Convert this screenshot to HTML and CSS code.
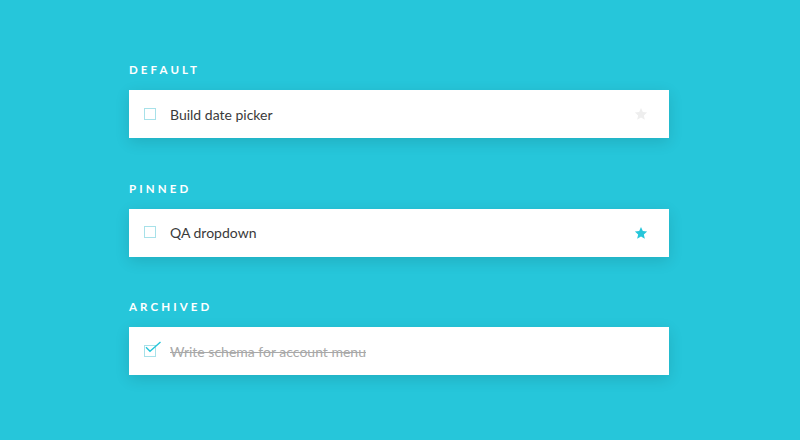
FILE: index.html
```html
<!DOCTYPE html>
<html>
<head>
<meta charset="utf-8">
<link rel="stylesheet" href="styles.css">
</head>
<body>
<div class="page">
  <section class="group">
    <h2 class="label">Default</h2>
    <div class="task">
      <span class="check"></span>
      <span class="title">Build date picker</span>
      <svg class="star" viewBox="0 0 24 24"><path d="M12 1.8l3.1 6.9 7.4.7-5.6 5 1.7 7.4L12 17.9l-6.6 3.9 1.7-7.4-5.6-5 7.4-.7z"/></svg>
    </div>
  </section>
  <section class="group">
    <h2 class="label">Pinned</h2>
    <div class="task">
      <span class="check"></span>
      <span class="title">QA dropdown</span>
      <svg class="star pinned" viewBox="0 0 24 24"><path d="M12 1.8l3.1 6.9 7.4.7-5.6 5 1.7 7.4L12 17.9l-6.6 3.9 1.7-7.4-5.6-5 7.4-.7z"/></svg>
    </div>
  </section>
  <section class="group">
    <h2 class="label">Archived</h2>
    <div class="task archived">
      <span class="check">
        <svg class="tick" viewBox="0 -6 20 20"><path d="M2 2.2L6 6.2L16.5 -3"/></svg>
      </span>
      <span class="title">Write schema for account menu</span>
    </div>
  </section>
</div>
</body>
</html>
```
FILE: styles.css
```css
html, body {
  margin: 0;
  padding: 0;
  background: #26c6da;
}
body {
  width: 800px;
  height: 440px;
  overflow: hidden;
}
.page {
  padding: 62px 131px 0 129px;
  display: flex;
  flex-direction: column;
  gap: 42.5px;
}
.label {
  margin: 0 0 12px 0;
  font-family: Lato, "Liberation Sans", sans-serif;
  font-weight: 700;
  font-size: 11.5px;
  line-height: 16px;
  letter-spacing: 0.27em;
  text-transform: uppercase;
  color: #ffffff;
}
.task {
  height: 48px;
  background: #ffffff;
  display: flex;
  align-items: center;
  padding: 0 21px 0 15px;
  box-shadow: 0 4px 14px rgba(0, 0, 0, 0.12);
}
.check {
  position: relative;
  width: 10px;
  height: 10px;
  border: 1px solid #a7e1e9;
  flex: none;
  margin-top: -1px;
}
.tick {
  position: absolute;
  left: -1px;
  top: -7px;
  width: 20px;
  height: 20px;
  fill: none;
  stroke: #26c6da;
  stroke-width: 1.4;
}
.title {
  margin-left: 14px;
  flex: 1;
  font-family: Lato, "Noto Sans", sans-serif;
  font-size: 14px;
  color: #3a3a3a;
}
.archived .title {
  color: #a8a8a8;
  text-decoration: line-through;
}
.star {
  width: 14px;
  height: 14px;
  fill: #eeeeee;
  flex: none;
}
.star.pinned {
  fill: #26c6da;
}
```
